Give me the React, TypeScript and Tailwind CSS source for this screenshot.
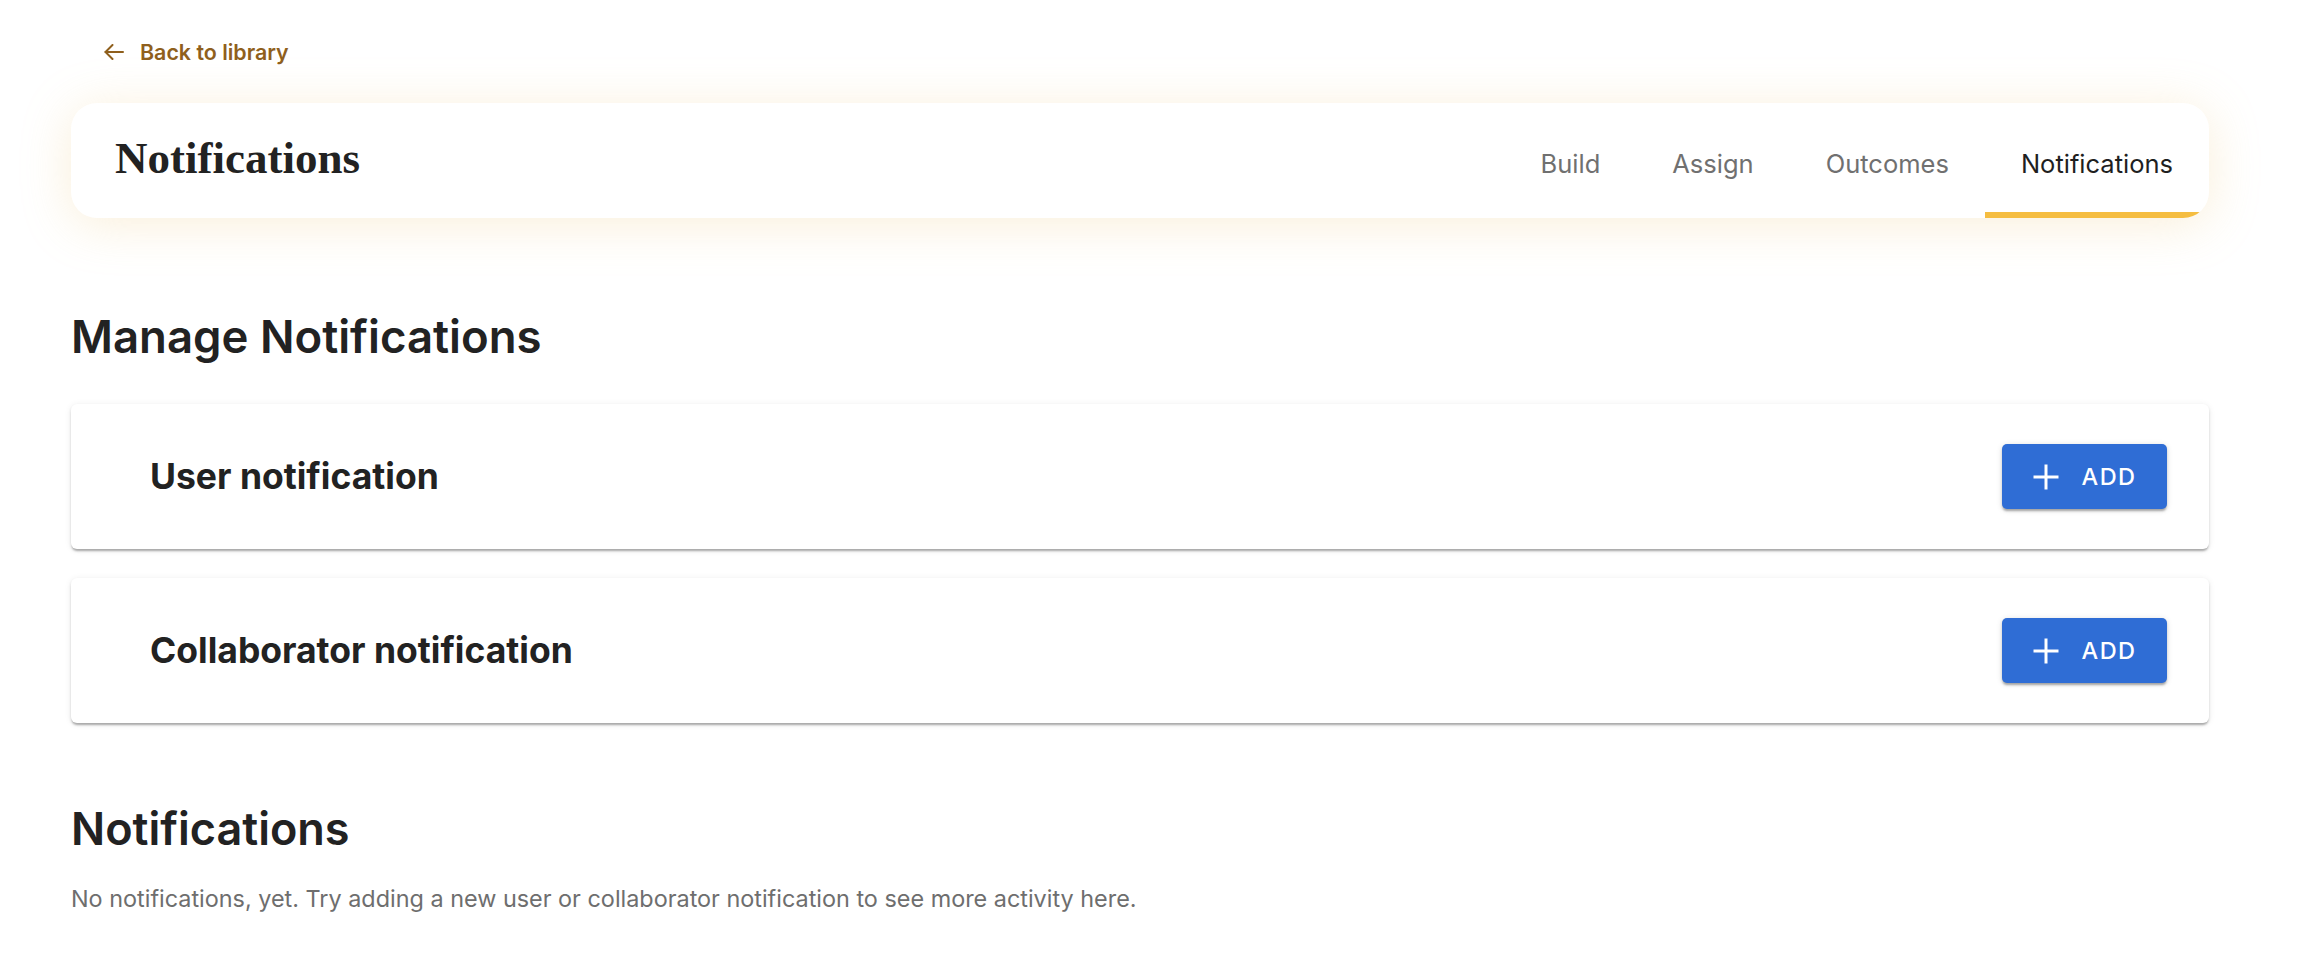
import React from "react";

const inter = { fontFamily: "Inter, 'Noto Sans', sans-serif" };

function PlusIcon() {
  return (
    <svg width="26" height="26" viewBox="0 0 26 26" fill="none" stroke="currentColor" strokeWidth="3">
      <line x1="13" y1="0.5" x2="13" y2="25.5" />
      <line x1="0.5" y1="13" x2="25.5" y2="13" />
    </svg>
  );
}

function BackArrow() {
  return (
    <svg width="20" height="16" viewBox="0 0 20 16" fill="none" stroke="currentColor" strokeWidth="2" strokeLinecap="round" strokeLinejoin="round">
      <line x1="1.5" y1="8" x2="19" y2="8" />
      <polyline points="8.5,1 1.5,8 8.5,15" />
    </svg>
  );
}

function NotifCard({ title }: { title: string }) {
  return (
    <div className="flex h-[145px] items-center justify-between rounded-[6px] bg-white pl-[79px] pr-[42px] shadow-[0_3px_2px_-1px_rgba(0,0,0,0.22),0_2px_3px_0_rgba(0,0,0,0.12),0_1px_7px_0_rgba(0,0,0,0.08)]">
      <h3 className="text-[35.5px] font-bold leading-none text-[#222222]">{title}</h3>
      <button className="flex h-[65px] w-[165px] items-center justify-center gap-[23px] rounded-[5px] bg-[#2f6dd5] pl-[2px] pr-[2px] text-[23.5px] font-medium tracking-[0.06em] text-white shadow-[0_3px_2px_-1px_rgba(0,0,0,0.2),0_2px_3px_0_rgba(0,0,0,0.14),0_1px_6px_0_rgba(0,0,0,0.12)]">
        <PlusIcon />
        <span>ADD</span>
      </button>
    </div>
  );
}

export default function App() {
  const tabs = ["Build", "Assign", "Outcomes", "Notifications"];
  return (
    <div className="min-h-screen bg-white pl-[71px] pr-[97px] pt-[37px]" style={inter}>
      <a className="ml-[33px] flex h-[30px] w-fit items-center gap-[16px] text-[21.4px] font-semibold text-[#8f5f1d]">
        <BackArrow />
        <span>Back to library</span>
      </a>

      <div className="mt-[36px] flex h-[115px] items-stretch justify-between overflow-hidden rounded-[26px] bg-white pl-[44px] shadow-[0_6px_50px_rgba(236,196,120,0.28)]">
        <h1
          className="self-center pb-[4px] text-[45px] font-bold leading-none text-[#222222]"
          style={{ fontFamily: "'Liberation Serif', serif" }}
        >
          Notifications
        </h1>
        <nav className="flex items-stretch">
          {tabs.map((t, i) => {
            const active = i === tabs.length - 1;
            return (
              <div
                key={t}
                className={
                  active
                    ? "flex items-center border-b-[6px] border-[#f5bd40] px-[36px] pt-[14px] text-[25.5px] text-[#1f1f1f]"
                    : "flex items-center border-b-[6px] border-transparent px-[36px] pt-[14px] text-[25.5px] text-[#707070]"
                }
              >
                {t}
              </div>
            );
          })}
        </nav>
      </div>

      <h2 className="mt-[95px] text-[45.5px] font-semibold leading-[48px] text-[#222222]">
        Manage Notifications
      </h2>

      <div className="mt-[43px] flex flex-col gap-[29px]">
        <NotifCard title="User notification" />
        <NotifCard title="Collaborator notification" />
      </div>

      <h2 className="mt-[79px] text-[45px] font-semibold leading-[54px] text-[#222222]">Notifications</h2>
      <p className="mt-[28px] text-[23.4px] leading-[30px] text-[#6e6e6e]">
        No notifications, yet. Try adding a new user or collaborator notification to see more activity here.
      </p>
    </div>
  );
}
